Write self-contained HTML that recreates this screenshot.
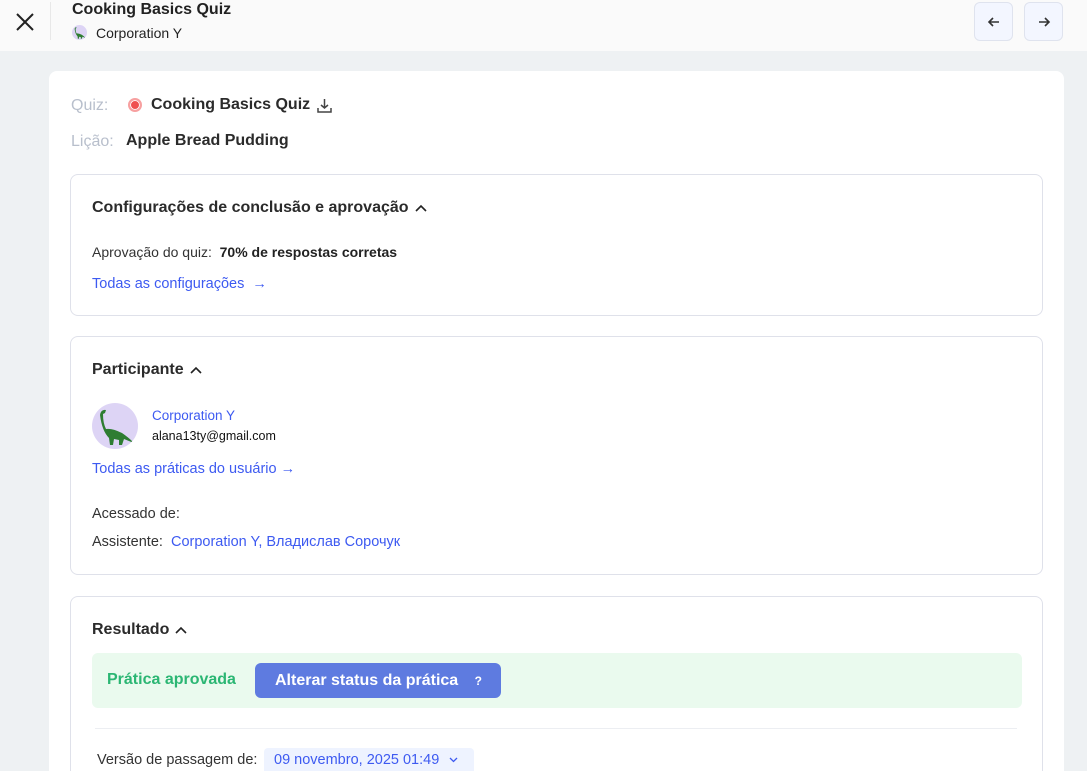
<!DOCTYPE html>
<html style="width:1087px;height:771px;overflow:hidden"><head><meta charset="utf-8"><style>
*{box-sizing:border-box;margin:0;padding:0}
body{width:1087px;height:771px;overflow:hidden;background:#eef1f3;font-family:"Liberation Sans",Arial,sans-serif;color:#222;position:relative}
.hdr{position:absolute;left:0;top:0;width:1087px;height:51px;background:#fafafa}
.abs{position:absolute}
.card{position:absolute;left:49px;top:71px;width:1015px;height:700px;background:#fff;border-radius:8px 8px 0 0;overflow:hidden}
.box{position:absolute;left:21px;width:973px;border:1px solid #dfe1ea;border-radius:8px;background:#fff}
.h{font-size:16px;font-weight:bold;color:#2b2b2b}
.link{color:#3d5af1;font-size:14.5px}
.nb{position:absolute;top:2px;width:39px;height:39px;border:1px solid #dfe3ee;border-radius:6px;background:#f3f6ff}
.chev{display:inline-block;vertical-align:middle;margin-left:6px}
</style></head><body>
<div class="hdr">
 <svg class="abs" style="left:15px;top:12px" width="20" height="20" viewBox="0 0 20 20"><path d="M2 2L18 18M18 2L2 18" stroke="#222" stroke-width="2"/></svg>
 <div class="abs" style="left:50px;top:2px;width:1px;height:38px;background:#e8e8e8"></div>
 <div class="abs" style="left:72px;top:1px;font-size:16px;font-weight:bold;color:#222">Cooking Basics Quiz</div>
 <div class="abs" style="left:72px;top:25px;width:15px;height:15px;border-radius:50%;background:#ddd4f5;overflow:hidden"><svg width="15" height="15" viewBox="0 0 46 46"><path d="M8 12Q9 6 14 7L13 10L11 11Q11 20 14 26Q20 25 30 30Q36 34 42 40L32 36L30 42H27L27 37L22 36L21 42H18L17 35Q10 28 8 12Z" fill="#2e7d32"/></svg></div>
 <div class="abs" style="left:96px;top:25px;font-size:14px;color:#222">Corporation Y</div>
 <div class="nb" style="left:974px"><svg style="position:absolute;left:12px;top:12px" width="14" height="14" viewBox="0 0 14 14"><path d="M12 7H2M6 3L2 7L6 11" stroke="#333" stroke-width="1.6" fill="none"/></svg></div>
 <div class="nb" style="left:1024px"><svg style="position:absolute;left:12px;top:12px" width="14" height="14" viewBox="0 0 14 14"><path d="M2 7H12M8 3L12 7L8 11" stroke="#333" stroke-width="1.6" fill="none"/></svg></div>
</div>
<div class="card">
 <div class="abs" style="left:22px;top:26px;font-size:16px;color:#b8bfcc">Quiz:</div>
 <div class="abs" style="left:79px;top:27px;width:14px;height:14px;border-radius:50%;border:2px solid #f7a0a0;background:#ef5050;box-shadow:inset 0 0 0 1px #fff"></div>
 <div class="abs h" style="left:102px;top:25px">Cooking Basics Quiz</div>
 <svg class="abs" style="left:267px;top:26px" width="17" height="17" viewBox="0 0 17 17"><path d="M8.5 2V11M5 8L8.5 11L12 8M2 11V15H15V11" stroke="#444" stroke-width="1.5" fill="none"/></svg>
 <div class="abs" style="left:22px;top:62px;font-size:16px;color:#b8bfcc">Lição:</div>
 <div class="abs h" style="left:77px;top:61px">Apple Bread Pudding</div>

 <div class="box" style="top:103px;height:142px">
  <div class="abs h" style="left:21px;top:24px">Configurações de conclusão e aprovação<svg class="chev" width="12" height="8" viewBox="0 0 12 8"><path d="M1 7L6 2L11 7" stroke="#222" stroke-width="1.6" fill="none"/></svg></div>
  <div class="abs" style="left:21px;top:69px;font-size:14px;color:#333">Aprovação do quiz: &nbsp;<b style="color:#222">70% de respostas corretas</b></div>
  <div class="abs link" style="left:21px;top:101px">Todas as configurações &nbsp;→</div>
 </div>

 <div class="box" style="top:265px;height:239px">
  <div class="abs h" style="left:21px;top:24px">Participante<svg class="chev" width="12" height="8" viewBox="0 0 12 8"><path d="M1 7L6 2L11 7" stroke="#222" stroke-width="1.6" fill="none"/></svg></div>
  <div class="abs" style="left:21px;top:66px;width:46px;height:46px;border-radius:50%;background:#ddd4f5;overflow:hidden"><svg width="46" height="46" viewBox="0 0 46 46"><path d="M8 12Q9 6 14 7L13 10L11 11Q11 20 14 26Q20 25 30 30Q36 34 42 40L32 36L30 42H27L27 37L22 36L21 42H18L17 35Q10 28 8 12Z" fill="#2e7d32"/></svg></div>
  <div class="abs link" style="left:81px;top:71px;font-size:13.5px">Corporation Y</div>
  <div class="abs" style="left:81px;top:92px;font-size:12.5px;color:#111">alana13ty@gmail.com</div>
  <div class="abs link" style="left:21px;top:124px">Todas as práticas do usuário →</div>
  <div class="abs" style="left:21px;top:169px;font-size:14.5px;color:#333">Acessado de:</div>
  <div class="abs" style="left:21px;top:197px;font-size:14.5px;color:#333">Assistente: &nbsp;<span class="link">Corporation Y, Владислав Сорочук</span></div>
 </div>

 <div class="box" style="top:525px;height:175px;border-bottom:none;border-radius:8px 8px 0 0">
  <div class="abs h" style="left:21px;top:24px">Resultado<svg class="chev" width="12" height="8" viewBox="0 0 12 8"><path d="M1 7L6 2L11 7" stroke="#222" stroke-width="1.6" fill="none"/></svg></div>
  <div class="abs" style="left:21px;top:56px;width:930px;height:55px;background:#eafaee;border-radius:6px">
   <div class="abs" style="left:15px;top:18px;font-size:16px;font-weight:bold;color:#2bb673">Prática aprovada</div>
   <div class="abs" style="left:163px;top:10px;width:246px;height:35px;background:#5e7be0;border-radius:6px;color:#fff;font-size:16px;font-weight:bold;padding:9px 0 0 20px">Alterar status da prática <span style="font-size:12px;margin-left:12px">?</span></div>
  </div>
  <div class="abs" style="left:24px;top:131px;width:922px;height:1px;background:#eceef2"></div>
  <div class="abs" style="left:26px;top:155px;font-size:14.5px;color:#333">Versão de passagem de:</div>
  <div class="abs" style="left:193px;top:151px;width:210px;height:24px;background:#eef3ff;border-radius:4px 4px 0 0;color:#3d5af1;font-size:14.5px;padding:4px 0 0 10px">09 novembro, 2025 01:49 <svg style="margin-left:6px;vertical-align:middle" width="9" height="6" viewBox="0 0 9 6"><path d="M1 1L4.5 4.5L8 1" stroke="#3d5af1" stroke-width="1.3" fill="none"/></svg></div>
 </div>
</div>
</body></html>
